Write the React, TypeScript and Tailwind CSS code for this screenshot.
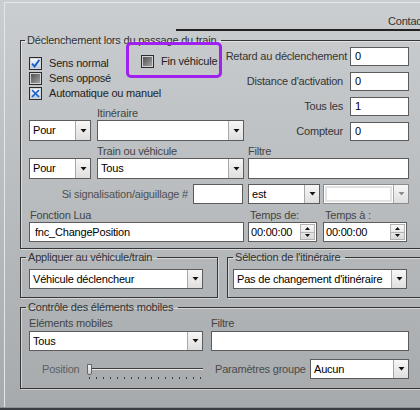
import React from 'react';

/* ─── Small pieces ───────────────────────────────────────────── */
function Arrow({ color = '#111' }: { color?: string }) {
  return (
    <svg width="7" height="4" viewBox="0 0 7 4">
      <path d="M0.5 0h6L3.5 3.5z" fill={color} />
    </svg>
  );
}

function Combo({ w, text = '', h = 'h-[21px]', disabled = false }: { w: string; text?: string; h?: string; disabled?: boolean }) {
  return (
    <div className={`flex ${w} ${h} shrink-0 border ${disabled ? 'border-[#8a8c8e]' : 'border-[#5c5c5c]'} bg-white`}>
      <span className={`flex flex-1 items-center whitespace-nowrap pl-[3px] text-black ${disabled ? 'm-[1px] border-2 border-[#e2e2e2]' : ''}`}>{text}</span>
      <span className="flex w-[15px] items-center justify-center border-l border-[#a8a8a8] bg-linear-to-b from-[#f7f7f7] to-[#dfdfdf]">
        <Arrow color={disabled ? '#8c8c8c' : '#111'} />
      </span>
    </div>
  );
}

function Field({ w, text = '', h = 'h-[19px]', pad = 'pl-[4px]' }: { w: string; text?: string; h?: string; pad?: string }) {
  return (
    <div className={`flex ${w} ${h} ${pad} shrink-0 items-center border border-[#5c5c5c] bg-white text-black`}>{text}</div>
  );
}

function Spin({ w }: { w: string }) {
  return (
    <div className={`flex ${w} h-[20px] shrink-0 border border-[#5c5c5c] bg-white`}>
      <span className="flex flex-1 items-center pl-[2px] text-black">00:00:00</span>
      <span className="my-px mr-px flex w-[15px] flex-col border border-[#b3b3b3] bg-linear-to-b from-[#f8f8f8] to-[#dadada]">
        <span className="flex flex-1 items-center justify-center border-b border-[#b3b3b3]">
          <svg width="5" height="3" viewBox="0 0 5 3"><path d="M0 3h5L2.5 0z" fill="#111" /></svg>
        </span>
        <span className="flex flex-1 items-center justify-center">
          <svg width="5" height="3" viewBox="0 0 5 3"><path d="M0 0h5L2.5 3z" fill="#111" /></svg>
        </span>
      </span>
    </div>
  );
}

function Box({ state }: { state: 'on' | 'off' | 'mixed' }) {
  return (
    <span className="flex h-[13px] w-[13px] shrink-0 border border-[#2c2c2c] bg-[#d4d4d4] p-px">
      {state === 'off' ? (
        <span className="flex-1 bg-linear-to-br from-[#535353] to-[#a2a2a2]" />
      ) : (
        <span className="flex flex-1 items-center justify-center bg-linear-to-b from-[#f6f9fd] to-[#b4cdea]">
          <svg width="9" height="9" viewBox="0 0 9 9">
            {state === 'on' ? (
              <path d="M1 4.6 L3.6 7.4 L8.4 0.8" stroke="#1c5ec6" strokeWidth="1.9" fill="none" />
            ) : (
              <path d="M1 1 L8 8 M8 1 L1 8" stroke="#1c5ec6" strokeWidth="1.7" fill="none" />
            )}
          </svg>
        </span>
      )}
    </span>
  );
}

function CheckRow({ state, label }: { state: 'on' | 'off' | 'mixed'; label: string }) {
  return (
    <div className="flex h-[15px] items-center gap-[7px] whitespace-nowrap text-[#222]">
      <Box state={state} />
      <span>{label}</span>
    </div>
  );
}

function NumRow({ label, value, gap }: { label: string; value: string; gap: string }) {
  return (
    <div className="flex h-[19px] items-center justify-end">
      <span className={`whitespace-nowrap ${gap}`}>{label}</span>
      <Field w="w-[59px]" text={value} />
    </div>
  );
}

function Slider() {
  const ticks = Array.from({ length: 17 });
  return (
    <div className="relative h-[20px] w-[117px] shrink-0">
      <span className="absolute left-[5px] right-0 top-[9px] h-[2px] border-t border-b border-t-[#3e3e3e] border-b-[#e8e8e8]" />
      <span className="absolute left-[1px] top-[5px] h-[11px] w-[5px] rounded-b-[2px] border border-[#666] bg-linear-to-b from-[#f2f2f2] to-[#cfcfcf]" />
      <div className="absolute left-[3px] top-[18px] flex w-[112px] justify-between">
        {ticks.map((_, i) => (
          <span key={i} className="h-[2px] w-px bg-[#3a3a3a]" />
        ))}
      </div>
    </div>
  );
}

const frame = 'border border-[#363636] shadow-[inset_1px_1px_0_rgba(255,255,255,0.45),1px_1px_0_rgba(255,255,255,0.45)]';

/* ─── Main ───────────────────────────────────────────────────── */
export default function App() {
  return (
    <div className="flex h-[410px] w-[420px] flex-col overflow-hidden bg-linear-to-b from-[#cbced0] to-[#a6aaad] font-['Liberation_Sans',Arial,sans-serif] text-[11px] tracking-[-0.2px] text-[#353535]">
      <div className="ml-[4px] mt-[2px] flex min-h-0 flex-1 flex-col border-l border-t border-[#e3e5e7]">
        {/* tab strip */}
        <div className="flex h-[28px] shrink-0">
          <div className="w-[171px] shrink-0" />
          <div className="flex-1 whitespace-nowrap border-b-2 border-[#222] pl-[212px] pt-[12px] leading-[13px] text-[#333]">Contac</div>
        </div>

        {/* ── Déclenchement ── */}
        <fieldset className={`ml-[15px] mt-[3px] w-[420px] shrink-0 pb-[6px] pl-[8px] ${frame}`}>
          <legend className="-ml-[4px] pl-[2px] pr-[5px] leading-[13px] text-[#333]">Déclenchement lors du passage du train</legend>

          <div className="flex">
            <div className="w-[215px] shrink-0 pt-[9px]">
              <div className="flex">
                <div className="w-[112px] shrink-0">
                  <CheckRow state="on" label="Sens normal" />
                  <CheckRow state="off" label="Sens opposé" />
                </div>
                <div className="relative -mt-[2px] h-[15px]">
                  <span className="pointer-events-none absolute -left-[15px] -top-[12px] h-[36px] w-[96px] rounded-[5px] border-[3px] border-[#a020f0]" />
                  <CheckRow state="off" label="Fin véhicule" />
                </div>
              </div>
              <CheckRow state="mixed" label="Automatique ou manuel" />
              <div className="mt-[5px] h-[14px] pl-[68px] leading-[14px] text-[#444]">Itinéraire</div>
              <div className="flex gap-[6px]">
                <Combo w="w-[62px]" text="Pour" />
                <Combo w="w-[147px]" />
              </div>
            </div>
            <div className="flex w-[165px] shrink-0 flex-col gap-[6px]">
              <NumRow label="Retard au déclenchement" value="0" gap="mr-[3px]" />
              <NumRow label="Distance d'activation" value="0" gap="mr-[7px]" />
              <NumRow label="Tous les" value="1" gap="mr-[7px]" />
              <NumRow label="Compteur" value="0" gap="mr-[7px]" />
            </div>
          </div>

          <div className="mt-[3px] flex h-[14px] leading-[14px] text-[#444]">
            <span className="w-[219px] shrink-0 pl-[68px]">Train ou véhicule</span>
            <span>Filtre</span>
          </div>
          <div className="flex">
            <Combo w="w-[62px]" text="Pour" />
            <div className="ml-[6px]"><Combo w="w-[147px]" text="Tous" /></div>
            <div className="ml-[4px]"><Field w="w-[161px]" h="h-[21px]" /></div>
          </div>

          <div className="mt-[5px] flex h-[20px] items-center">
            <span className="w-[159px] shrink-0 whitespace-nowrap text-right text-[#505050]">Si signalisation/aiguillage #</span>
            <div className="ml-[5px]"><Field w="w-[50px]" h="h-[20px]" /></div>
            <div className="ml-[5px]"><Combo w="w-[72px]" h="h-[20px]" text="est" /></div>
            <div className="ml-[3px]"><Combo w="w-[86px]" h="h-[20px]" disabled /></div>
          </div>

          <div className="mt-[4px] flex h-[14px] leading-[14px] text-[#444]">
            <span className="w-[221px] shrink-0 pl-[1px]">Fonction Lua</span>
            <span className="w-[75px] shrink-0">Temps de:</span>
            <span>Temps à :</span>
          </div>
          <div className="flex">
            <Field w="w-[215px]" h="h-[20px]" pad="pl-[5px]" text="fnc_ChangePosition" />
            <div className="ml-[4px]"><Spin w="w-[69px]" /></div>
            <div className="ml-[6px]"><Spin w="w-[84px]" /></div>
          </div>
        </fieldset>

        {/* ── Appliquer / Sélection ── */}
        <div className="mt-[2px] flex shrink-0">
          <fieldset className={`ml-[15px] w-[198px] shrink-0 pb-[8px] pl-[8px] pt-[5px] ${frame}`}>
            <legend className="-ml-[3px] pl-[2px] pr-[5px] leading-[13px] text-[#333]">Appliquer au véhicule/train</legend>
            <Combo w="w-[174px]" h="h-[20px]" text="Véhicule déclencheur" />
          </fieldset>
          <fieldset className={`ml-[9px] w-[200px] shrink-0 pb-[8px] pl-[5px] pt-[5px] ${frame}`}>
            <legend className="pl-[2px] pr-[5px] leading-[13px] text-[#333]">Sélection de l'itinéraire</legend>
            <Combo w="w-[174px]" h="h-[20px]" text="Pas de changement d'itinéraire" />
          </fieldset>
        </div>

        {/* ── Contrôle des éléments mobiles ── */}
        <fieldset className={`ml-[15px] mt-[3px] w-[420px] shrink-0 pb-[9px] pl-[8px] ${frame}`}>
          <legend className="-ml-[3px] pl-[2px] pr-[5px] leading-[13px] text-[#333]">Contrôle des éléments mobiles</legend>
          <div className="mt-[2px] flex h-[14px] leading-[14px] text-[#444]">
            <span className="w-[182px] shrink-0">Eléments mobiles</span>
            <span>Filtre</span>
          </div>
          <div className="mt-px flex">
            <Combo w="w-[174px]" h="h-[20px]" text="Tous" />
            <div className="ml-[8px]"><Field w="w-[198px]" h="h-[20px]" /></div>
          </div>
          <div className="mt-[8px] flex h-[20px] items-center">
            <span className="w-[57px] shrink-0 pl-[13px] text-[#5c5f62]">Position</span>
            <Slider />
            <span className="ml-[12px] w-[95px] shrink-0 whitespace-nowrap text-[#4a4a4a]">Paramètres groupe</span>
            <Combo w="w-[99px]" h="h-[20px]" text="Aucun" />
          </div>
        </fieldset>
      </div>
      <div className="h-[3px] shrink-0 border-t border-[#8d9195] bg-[#3a3e42]" />
    </div>
  );
}
